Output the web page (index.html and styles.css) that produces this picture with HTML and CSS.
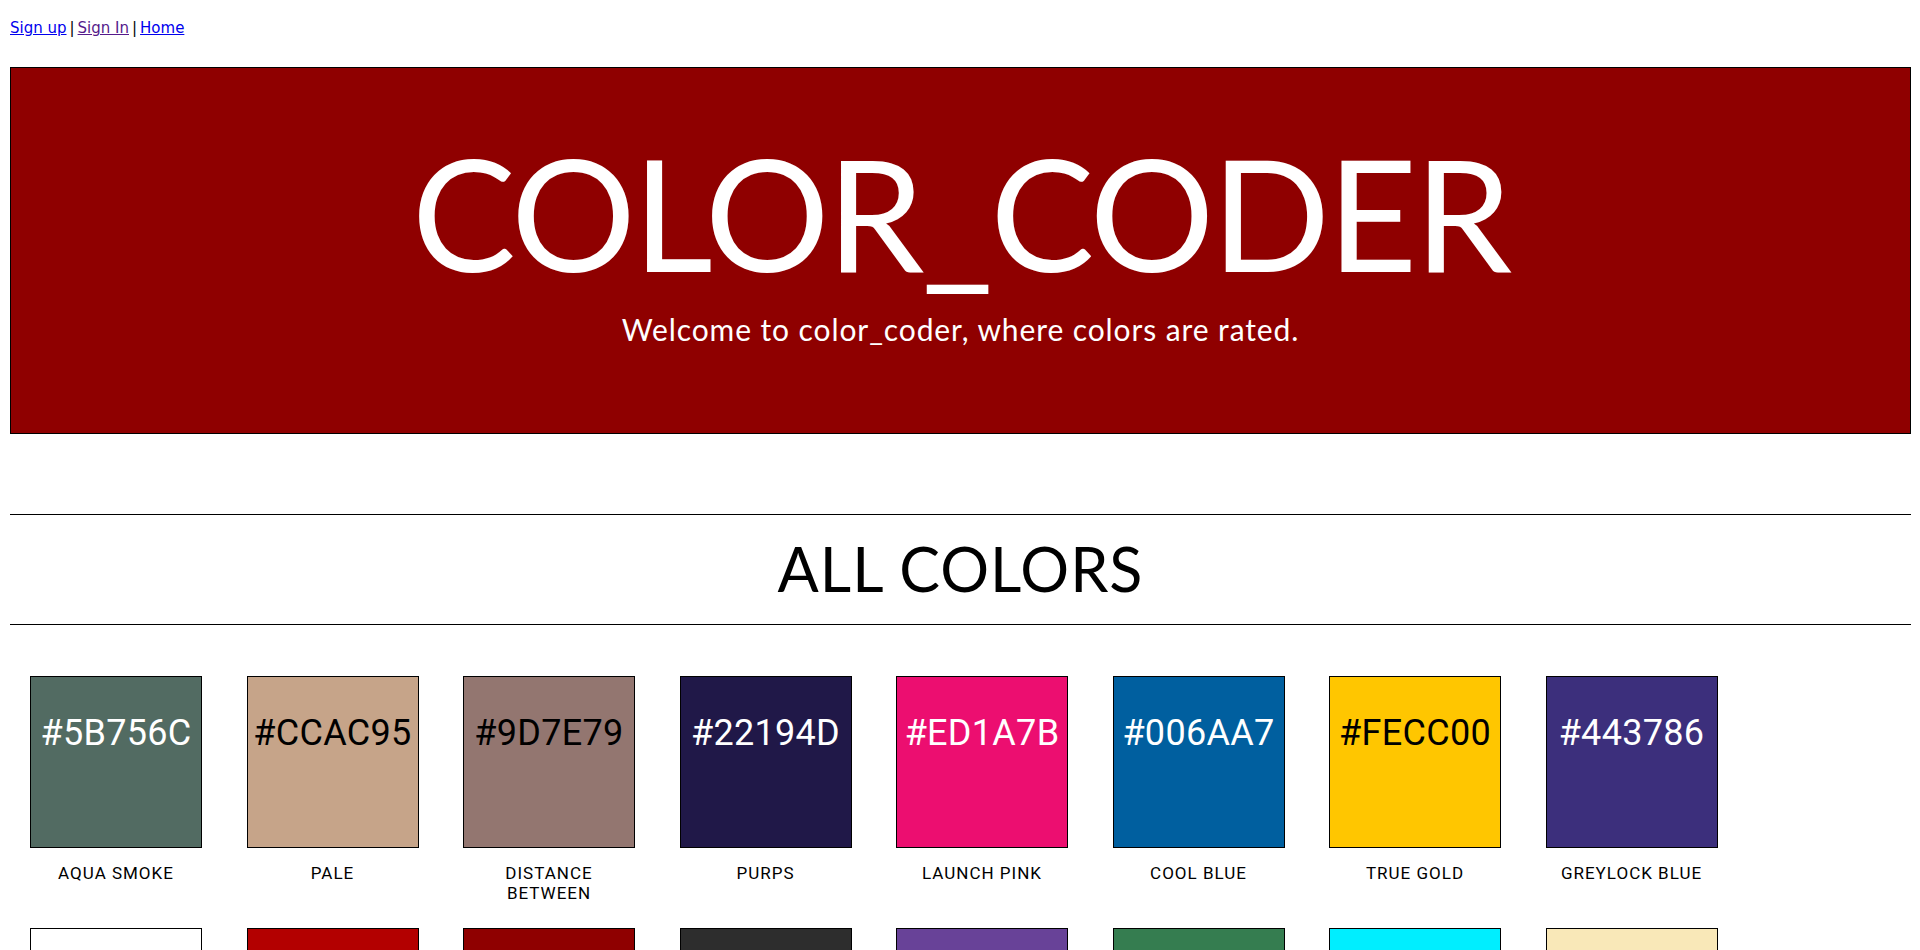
FILE: index.html
```html
<!DOCTYPE html>
<html lang="en">
<head>
<meta charset="utf-8">
<title>color_coder</title>
<link rel="stylesheet" href="styles.css">
</head>
<body>
<nav class="topnav">
  <a href="#" class="link">Sign up</a><span class="sep">|</span><a href="#" class="link visited">Sign In</a><span class="sep">|</span><a href="#" class="link">Home</a>
</nav>

<header class="hero">
  <h1 class="hero-title">COLOR_CODER</h1>
  <p class="hero-sub">Welcome to color_coder, where colors are rated.</p>
</header>

<section class="colors">
  <hr class="rule">
  <h2 class="section-title">ALL COLORS</h2>
  <hr class="rule">

  <ul class="grid">
    <li class="item"><div class="swatch light-text c1">#5B756C</div><p class="name">AQUA SMOKE</p></li>
    <li class="item"><div class="swatch c2">#CCAC95</div><p class="name">PALE</p></li>
    <li class="item"><div class="swatch c3">#9D7E79</div><p class="name">DISTANCE BETWEEN</p></li>
    <li class="item"><div class="swatch light-text c4">#22194D</div><p class="name">PURPS</p></li>
    <li class="item"><div class="swatch light-text c5">#ED1A7B</div><p class="name">LAUNCH PINK</p></li>
    <li class="item"><div class="swatch light-text c6">#006AA7</div><p class="name">COOL BLUE</p></li>
    <li class="item"><div class="swatch c7">#FECC00</div><p class="name">TRUE GOLD</p></li>
    <li class="item"><div class="swatch light-text c8">#443786</div><p class="name">GREYLOCK BLUE</p></li>

    <li class="item"><div class="swatch c9">#FFFFFF</div><p class="name">WHITE</p></li>
    <li class="item"><div class="swatch light-text c10">#B30000</div><p class="name">RED</p></li>
    <li class="item"><div class="swatch light-text c11">#8B0000</div><p class="name">DARK RED</p></li>
    <li class="item"><div class="swatch light-text c12">#2D2D2D</div><p class="name">CHARCOAL</p></li>
    <li class="item"><div class="swatch light-text c13">#663399</div><p class="name">REBECCA PURPLE</p></li>
    <li class="item"><div class="swatch light-text c14">#357D50</div><p class="name">FOREST</p></li>
    <li class="item"><div class="swatch c15">#00EEFF</div><p class="name">CYAN</p></li>
    <li class="item"><div class="swatch c16">#F9E8B8</div><p class="name">WHEAT</p></li>
  </ul>
</section>
</body>
</html>
```

FILE: styles.css
```css
html, body {
  margin: 0;
  padding: 0;
  background: #ffffff;
}

body {
  padding: 0 9px 0 10px;
  color: #000;
}

.topnav {
  padding-top: 16px;
  font-family: "DejaVu Sans", sans-serif;
  font-size: 15px;
  line-height: 24px;
  height: 24px;
}

.link {
  color: #0000ee;
  text-decoration: underline;
}

.link.visited {
  color: #551a8b;
}

.sep {
  margin: 0 3px;
  color: #000;
}

.hero {
  margin-top: 27px;
  background: #8f0000;
  border: 1px solid #000;
  padding: 66px 0 86px;
  text-align: center;
  color: #fff;
  font-family: Lato, "Open Sans", sans-serif;
}

.hero-title {
  margin: 0;
  font-size: 156px;
  line-height: 156px;
  font-weight: 400;
  letter-spacing: -2.9px;
}

.hero-sub {
  margin: 22px 0 0;
  font-size: 30px;
  line-height: 35px;
  font-weight: 400;
  letter-spacing: 0.9px;
}

.colors {
  margin-top: 80px;
}

.rule {
  margin: 0;
  border: 0;
  border-top: 1px solid #000;
  height: 0;
}

.section-title {
  margin: 17px 0 19px;
  text-align: center;
  font-family: Lato, "Open Sans", sans-serif;
  font-weight: 400;
  font-size: 61px;
  line-height: 73px;
  letter-spacing: 1px;
}

.grid {
  list-style: none;
  margin: 51px 0 0;
  padding: 0 0 0 20px;
  display: flex;
  flex-wrap: wrap;
  column-gap: 44.5px;
  row-gap: 25px;
}

.item {
  width: 172px;
  display: flex;
  flex-direction: column;
  align-items: center;
}

.swatch {
  box-sizing: border-box;
  width: 172px;
  height: 172px;
  border: 1px solid #000;
  padding-top: 35px;
  text-align: center;
  font-family: Roboto, sans-serif;
  font-size: 36px;
  line-height: 43px;
  color: #000;
  letter-spacing: 0.3px;
}

.swatch.light-text {
  color: #fff;
}

.name {
  margin: 15px 0 0;
  max-width: 150px;
  text-align: center;
  font-family: Roboto, sans-serif;
  font-size: 17px;
  line-height: 20px;
  letter-spacing: 1px;
  color: #000;
}

.c1 { background: #526b62; }
.c2 { background: #c6a489; }
.c3 { background: #937670; }
.c4 { background: #201848; }
.c5 { background: #ec0e70; }
.c6 { background: #005f9f; }
.c7 { background: #ffc600; }
.c8 { background: #3c2f7c; }
.c9 { background: #ffffff; }
.c10 { background: #b30000; }
.c11 { background: #8f0000; }
.c12 { background: #2d2d2d; }
.c13 { background: #684298; }
.c14 { background: #357d50; }
.c15 { background: #00eeff; }
.c16 { background: #f9e8b8; }
```
